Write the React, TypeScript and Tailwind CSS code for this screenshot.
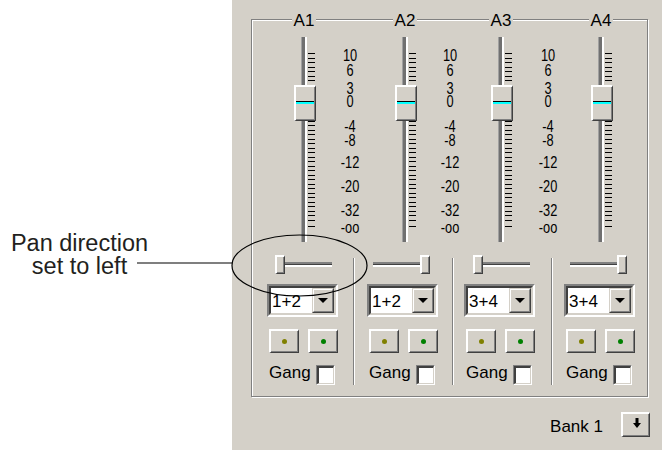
import React from 'react';

type Strip = {
  name: string;
  width: string;
  track: string;
  labels: string | null;
  pan: string;
  content: string;
  divider: boolean;
  panLeft: boolean;
  route: string;
};

const strips: Strip[] = [
  { name: 'A1', width: 'w-[101px]', track: 'ml-[49px]', labels: 'left-[78px]', pan: 'ml-[23px]', content: 'ml-[15px]', divider: false, panLeft: true, route: '1+2' },
  { name: 'A2', width: 'w-[99px]', track: 'ml-[49px]', labels: 'left-[77px]', pan: 'ml-[19px]', content: 'ml-[13px]', divider: true, panLeft: false, route: '1+2' },
  { name: 'A3', width: 'w-[99px]', track: 'ml-[46px]', labels: 'left-[76px]', pan: 'ml-[20px]', content: 'ml-[11px]', divider: true, panLeft: true, route: '3+4' },
  { name: 'A4', width: 'w-[96px]', track: 'ml-[47px]', labels: null, pan: 'ml-[18px]', content: 'ml-[12px]', divider: true, panLeft: false, route: '3+4' },
];

// dB scale, top offset inside the fader row
const scale = [
  { text: '10', top: 13 },
  { text: '6', top: 28 },
  { text: '3', top: 46 },
  { text: '0', top: 59 },
  { text: '-4', top: 84 },
  { text: '-8', top: 98 },
  { text: '-12', top: 120 },
  { text: '-20', top: 144 },
  { text: '-32', top: 168 },
  { text: '-oo', top: 185 },
];

const ticks = [...Array.from({ length: 38 }, (_, i) => Math.round(16 + i * 4.5)), 189];

const Raised = ({
  className = '',
  inner = 'flex items-center justify-center',
  children,
}: {
  className?: string;
  inner?: string;
  children?: React.ReactNode;
}) => (
  <div className={`border-t-2 border-l-2 border-r border-b border-t-white border-l-white border-r-[#404040] border-b-[#404040] ${className}`}>
    <div className={`w-full h-full border-r border-b border-r-[#808080] border-b-[#808080] bg-[#d4d0c8] ${inner}`}>
      {children}
    </div>
  </div>
);

const PanSlider = ({ left }: { left: boolean }) => {
  const thumb = <Raised className="w-[10px] h-[19px] shrink-0" />;
  const track = <div className="flex-1 h-[5px] border-t-2 border-b-2 border-t-[#808080] border-b-white bg-[#404040]" />;
  return (
    <div className="w-[57px] h-[19px] flex items-center">
      {left ? thumb : track}
      {left ? track : thumb}
    </div>
  );
};

const Combo = ({ value }: { value: string }) => (
  <div className="w-[71px] h-[33px] border-2 border-t-[#808080] border-l-[#808080] border-r-white border-b-white">
    <div className="h-full flex bg-white border-2 border-t-[#404040] border-l-[#404040] border-r-[#d4d0c8] border-b-[#d4d0c8]">
      <div className="flex-1 pl-[1px] pt-[2px] leading-[23px]">{value}</div>
      <div className="w-[22px] h-full border border-t-[#d4d0c8] border-l-[#d4d0c8] border-r-[#404040] border-b-[#404040]">
        <div className="w-full h-full flex items-center justify-center bg-[#d4d0c8] border border-t-white border-l-white border-r-[#808080] border-b-[#808080]">
          <svg width="10" height="5">
            <polygon points="0,0 10,0 5,5" fill="#000" />
          </svg>
        </div>
      </div>
    </div>
  </div>
);

const CheckBox = () => (
  <div className="w-[19px] h-[20px] border border-t-[#808080] border-l-[#808080] border-r-white border-b-white">
    <div className="w-full h-full bg-white border-t-2 border-l-2 border-r border-b border-t-[#404040] border-l-[#404040] border-r-[#d4d0c8] border-b-[#d4d0c8]" />
  </div>
);

const Channel = ({ s }: { s: Strip }) => (
  <div className={`${s.width} flex flex-col`}>
    {/* legend on the group frame */}
    <div className="-mt-[8px] h-[17px] flex">
      <div className={`${s.track} w-[6px] flex justify-center`}>
        <span className="bg-[#d4d0c8] px-[2px] leading-[17px] whitespace-nowrap">{s.name}</span>
      </div>
    </div>

    {/* fader */}
    <div className="relative mt-[8px] h-[205px] flex">
      <div className={`${s.track} relative w-[6px] h-full flex`}>
        <div className="w-[1px] h-full bg-[#a0a0a0]" />
        <div className="w-[3px] h-full bg-[#707070]" />
        <div className="w-[2px] h-full bg-white" />
        <Raised className="absolute left-[-7px] top-[48px] z-10 w-[22px] h-[36px]" inner="pt-[14px]">
          <div className="h-[1px] bg-black" />
          <div className="h-[2px] bg-[#00ffff]" />
        </Raised>
      </div>
      <svg className="ml-[1px]" width="8" height="205">
        {ticks.map((y, i) => (
          <rect key={i} x="0" y={y} width="7" height="1" fill="#000" />
        ))}
      </svg>
      {s.labels && (
        <div className={`absolute top-0 ${s.labels} w-[40px] h-full`}>
          {scale.map((l) => (
            <div
              key={l.text}
              className="absolute inset-x-0 text-center text-[16px] leading-[11px] scale-x-[0.8]"
              style={{ top: l.top }}
            >
              {l.text}
            </div>
          ))}
        </div>
      )}
    </div>

    {/* pan, routing, buttons, gang */}
    <div
      className={`mt-[16px] h-[127px] flex flex-col ${
        s.divider ? 'border-l border-[#808080] shadow-[inset_1px_0_0_#fff]' : ''
      }`}
    >
      <div className={`-mt-[3px] ${s.pan}`}>
        <PanSlider left={s.panLeft} />
      </div>
      <div className={`${s.content} mt-[10px] flex flex-col`}>
        <Combo value={s.route} />
        <div className="mt-[12px] pl-[2px] flex gap-[9px]">
          <Raised className="w-[30px] h-[24px]">
            <div className="w-[5px] h-[5px] rounded-full bg-[#808000]" />
          </Raised>
          <Raised className="w-[30px] h-[24px]">
            <div className="w-[5px] h-[5px] rounded-full bg-[#008000]" />
          </Raised>
        </div>
        <div className="mt-[12px] pl-[2px] flex items-start">
          <span className="leading-[15px]">Gang</span>
          <div className="ml-[5px]">
            <CheckBox />
          </div>
        </div>
      </div>
    </div>
  </div>
);

export default function App() {
  return (
    <div className="relative w-[662px] h-[450px] flex bg-white font-['Liberation_Sans',Arial,sans-serif]">
      {/* Callout text */}
      <div className="w-[232px] shrink-0">
        <div className="w-[159px] pt-[232px] text-center text-[23.5px] leading-[23px] text-[#231f20]">
          <div>Pan direction</div>
          <div>set to left</div>
        </div>
      </div>

      {/* Dialog panel */}
      <div className="w-[430px] h-full bg-[#d4d0c8] pt-[19px] pl-[19px] flex flex-col text-[17px] text-black">
        <div className="w-[397px] h-[378px] border border-[#808080] shadow-[inset_1px_1px_0_#fff,1px_1px_0_#fff] flex">
          {strips.map((s) => (
            <Channel key={s.name} s={s} />
          ))}
        </div>

        <div className="mt-[15px] w-[399px] flex justify-end items-start">
          <span className="mt-[6px] leading-[17px]">Bank 1</span>
          <Raised className="ml-[18px] w-[29px] h-[25px]" inner="block">
            <svg width="25" height="21">
              <rect x="12.5" y="4" width="3" height="6" fill="#000" />
              <polygon points="10,9 18,9 14,14" fill="#000" />
            </svg>
          </Raised>
        </div>
      </div>

      {/* Callout line and ellipse */}
      <svg className="absolute inset-0 pointer-events-none" width="662" height="450">
        <line x1="137" y1="263" x2="232" y2="263" stroke="#000" strokeWidth="1.2" />
        <ellipse cx="299.5" cy="265.5" rx="67.5" ry="30.5" fill="none" stroke="#000" strokeWidth="1.2" />
      </svg>
    </div>
  );
}
